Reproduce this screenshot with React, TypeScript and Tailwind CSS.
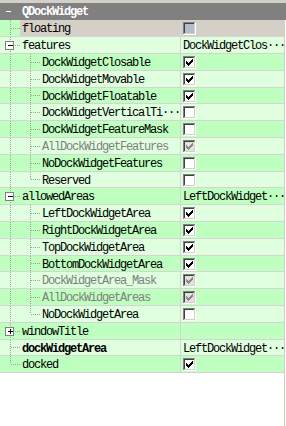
import React from 'react'

type Row = {
  label: string
  level: 0 | 1
  expand?: 'minus' | 'plus'
  value?: string
  check?: boolean
  disabled?: boolean
  bold?: boolean
  lastChild?: boolean
  selected?: boolean
}

const rows: Row[] = [
  { label: 'floating', level: 0, check: false, selected: true },
  { label: 'features', level: 0, expand: 'minus', value: 'DockWidgetClos···' },
  { label: 'DockWidgetClosable', level: 1, check: true },
  { label: 'DockWidgetMovable', level: 1, check: true },
  { label: 'DockWidgetFloatable', level: 1, check: true },
  { label: 'DockWidgetVerticalTi···', level: 1, check: false },
  { label: 'DockWidgetFeatureMask', level: 1, check: false },
  { label: 'AllDockWidgetFeatures', level: 1, check: true, disabled: true },
  { label: 'NoDockWidgetFeatures', level: 1, check: false },
  { label: 'Reserved', level: 1, check: false, lastChild: true },
  { label: 'allowedAreas', level: 0, expand: 'minus', value: 'LeftDockWidget···' },
  { label: 'LeftDockWidgetArea', level: 1, check: true },
  { label: 'RightDockWidgetArea', level: 1, check: true },
  { label: 'TopDockWidgetArea', level: 1, check: true },
  { label: 'BottomDockWidgetArea', level: 1, check: true },
  { label: 'DockWidgetArea_Mask', level: 1, check: true, disabled: true },
  { label: 'AllDockWidgetAreas', level: 1, check: true, disabled: true },
  { label: 'NoDockWidgetArea', level: 1, check: false, lastChild: true },
  { label: 'windowTitle', level: 0, expand: 'plus' },
  { label: 'dockWidgetArea', level: 0, bold: true, value: 'LeftDockWidget···' },
  { label: 'docked', level: 0, check: true },
]

const DOT = '#a0a0a0'

function Checkbox({ checked, disabled, tint }: { checked: boolean; disabled?: boolean; tint?: boolean }) {
  const fill = tint ? '#b4bccc' : disabled ? '#e4e2dc' : '#ffffff'
  const mark = disabled ? '#8a8a8a' : '#000000'
  const cols = [5, 6, 7, 6, 5, 4, 3]
  return (
    <svg width="13" height="13" viewBox="0 0 13 13" shapeRendering="crispEdges" className="block">
      <rect x="0" y="0" width="13" height="13" fill="#ffffff" />
      <path d="M0 0h12v1H1v11H0z" fill="#808080" />
      <path d="M1 1h10v1H2v9H1z" fill="#404040" />
      <path d="M11 1h1v11H1v-1h10z" fill="#d4d0c8" />
      <rect x="2" y="2" width="9" height="9" fill={fill} />
      {checked && cols.map((y, i) => <rect key={i} x={3 + i} y={y} width="1" height="3" fill={mark} />)}
    </svg>
  )
}

function Branch({ row, h, lastTop }: { row: Row; h: number; lastTop: boolean }) {
  const w = row.level === 0 ? 20 : 40
  const c = Math.floor(h / 2)
  const x0 = 10.5
  const x1 = 30.5
  const bx = row.level === 0 ? 10 : 30
  return (
    <svg width={w} height={h} className="block shrink-0" shapeRendering="crispEdges">
      {row.level === 0 ? (
        <line x1={x0} y1={0} x2={x0} y2={lastTop ? c : h} stroke={DOT} strokeDasharray="1 1" />
      ) : (
        <>
          <line x1={x0} y1={0} x2={x0} y2={h} stroke={DOT} strokeDasharray="1 1" />
          <line x1={x1} y1={0} x2={x1} y2={row.lastChild ? c : h} stroke={DOT} strokeDasharray="1 1" />
        </>
      )}
      <line x1={bx + 1} y1={c + 0.5} x2={w} y2={c + 0.5} stroke={DOT} strokeDasharray="1 1" />
      {row.expand && (
        <>
          <rect x={bx - 4.5} y={c - 3.5} width="8" height="8" fill="#ffffff" stroke="#808080" />
          <line x1={bx - 2} y1={c + 0.5} x2={bx + 3} y2={c + 0.5} stroke="#000" />
          {row.expand === 'plus' && <line x1={bx + 0.5} y1={c - 2} x2={bx + 0.5} y2={c + 3} stroke="#000" />}
        </>
      )}
    </svg>
  )
}

export default function App() {
  return (
    <div className="w-[286px] h-[426px] bg-white flex flex-col overflow-hidden font-['Liberation_Mono',monospace] text-[12px] tracking-[-1.2px] leading-none">
      <div className="h-[3px] bg-[#d4d0c8]" />
      <div className="h-[17px] bg-[#808080] flex items-center text-white font-bold">
        <div className="w-[22px] flex justify-start pl-[6px]">
          <div className="w-[5px] h-px bg-white" />
        </div>
        <span className="pt-px">QDockWidget</span>
      </div>
      <div className="flex-1 w-[285px] border-r border-[#d4d0c8]">
        {rows.map((row, i) => {
          const h = i % 5 === 4 ? 16 : 17
          const bg = i % 2 === 0 ? 'bg-[#bfffbf]' : 'bg-[#dfffdf]'
          const text = row.disabled ? 'text-[#808080]' : 'text-black'
          return (
            <div key={i} className={`flex border-b border-[#d4d4d4] ${h === 16 ? 'h-[16px]' : 'h-[17px]'} ${bg}`}>
              <div className="flex w-[181px] shrink-0 border-r border-[#d4d4d4]">
                <Branch row={row} h={h - 1} lastTop={i === rows.length - 1} />
                <div className={`flex flex-1 items-center pl-[2px] pt-[2px] whitespace-nowrap overflow-hidden ${text} ${row.bold ? 'font-bold' : ''} ${row.selected ? 'bg-[#d4d0c8]' : ''}`}>
                  {row.label}
                </div>
              </div>
              <div className={`flex flex-1 items-center pl-[2px] whitespace-nowrap overflow-hidden text-black ${row.check !== undefined ? 'pt-px' : 'pt-[2px]'} ${row.selected ? 'bg-[#d4d0c8]' : ''}`}>
                {row.check !== undefined ? (
                  <Checkbox checked={row.check} disabled={row.disabled} tint={row.selected} />
                ) : (
                  row.value
                )}
              </div>
            </div>
          )
        })}
      </div>
    </div>
  )
}
